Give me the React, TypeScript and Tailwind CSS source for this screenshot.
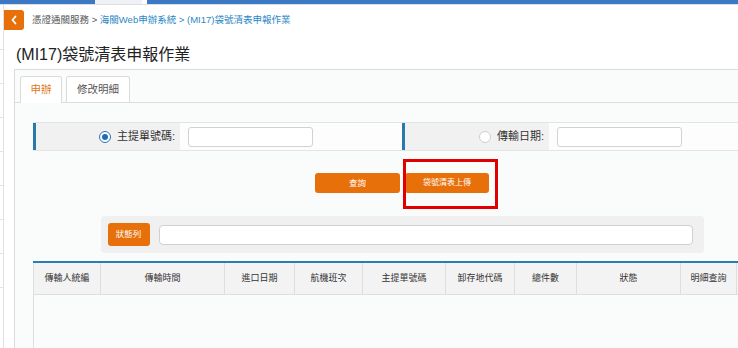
import React from "react";

const font = { fontFamily: '"Liberation Sans", "Noto Sans CJK TC", sans-serif' };

function Radio({ checked }: { checked: boolean }) {
  return (
    <span
      className={
        "flex h-[12px] w-[12px] items-center justify-center rounded-full border bg-white " +
        (checked ? "border-[#2a70b8]" : "border-[#cfcfcf]")
      }
    >
      {checked && <span className="h-[6px] w-[6px] rounded-full bg-[#1f6bb5]" />}
    </span>
  );
}

function FieldCell({ label, checked, inputLeft }: { label: string; checked: boolean; inputLeft: number }) {
  return (
    <div className="flex h-full w-[369px] shrink-0 border-l-[3px] border-[#2a79ad]">
      <div className="flex h-full w-[144px] shrink-0 items-center justify-end gap-[6px] bg-[#f1f1f1] pr-[5px]">
        <Radio checked={checked} />
        <span className="text-[11px] leading-none text-[#333]">{label}</span>
      </div>
      <div className="flex h-full flex-1 items-center bg-[#fdfdfd]" style={{ paddingLeft: inputLeft }}>
        <div className="h-[20px] w-[125px] rounded-[3px] border border-[#d2d2d2] bg-white" />
      </div>
    </div>
  );
}

const cols: [string, number][] = [
  ["傳輸人統編", 68],
  ["傳輸時間", 124],
  ["進口日期", 70],
  ["航機班次", 68],
  ["主提單號碼", 83],
  ["卸存地代碼", 69],
  ["總件數", 62],
  ["狀態", 104],
  ["明細查詢", 56],
  ["", 34],
];

export default function App() {
  return (
    <div className="relative h-[348px] w-[738px] overflow-hidden bg-white" style={font}>
      {/* top strip */}
      <div className="flex h-[4px]">
        <div className="h-full w-[95px] bg-[#3c79c4]" />
        <div className="h-full w-[47px] bg-[#eef2f7]" />
        <div className="h-full w-[5px] bg-white" />
        <div className="h-full flex-1 bg-[#3c79c4]" />
      </div>
      <div className="h-px bg-[#dedede]" />

      <div className="flex h-[343px]">
        {/* sidebar remnant */}
        <div className="flex w-[4px] shrink-0 flex-col border-r border-[#e2e2e2] pt-[44px]">
          {[0, 1, 2, 3, 4, 5, 6, 7].map((i) => (
            <div key={i} className="mb-[33px] h-px w-[3px] bg-[#e2e2e2]" />
          ))}
        </div>

        <div className="flex min-w-0 flex-1 flex-col">
          {/* breadcrumb */}
          <div className="mt-[5px] flex h-[20px] items-center">
            <div className="flex h-[20px] w-[20px] items-center justify-center rounded-r-[3px] bg-[#e8700b]">
              <svg width="8" height="10" viewBox="0 0 8 10">
                <polyline points="5.5,1.5 2.5,5 5.5,8.5" fill="none" stroke="white" strokeWidth="1.8" strokeLinecap="round" strokeLinejoin="round" />
              </svg>
            </div>
            <div className="ml-[8px] whitespace-nowrap text-[9.5px] leading-none">
              <span className="text-[#555]">憑證通關服務 &gt; </span>
              <span className="text-[#2b87c4]">海關Web申辦系統 &gt; (MI17)袋號清表申報作業</span>
            </div>
          </div>

          {/* title */}
          <div className="ml-[12px] mt-[15px] whitespace-nowrap text-[16px] leading-[20px] text-[#222]">
            (MI17)袋號清表申報作業
          </div>

          {/* panel */}
          <div className="ml-[10px] mt-[4px] flex-1 border-l border-t border-[#dcdcdc] bg-[#fafbfb]">
            {/* tabs */}
            <div className="mt-[6px] flex h-[27px] items-end gap-[4px] border-b border-[#dcdcdc] pl-[5px]">
              <div className="-mb-px flex h-[27px] w-[42px] items-center justify-center rounded-t-[3px] border border-b-0 border-[#dcdcdc] bg-white text-[10.5px] text-[#e07a22]">
                申辦
              </div>
              <div className="flex h-[26px] w-[64px] items-center justify-center rounded-t-[3px] border border-b-0 border-[#dcdcdc] bg-white text-[10.5px] text-[#555]">
                修改明細
              </div>
            </div>

            {/* content */}
            <div className="ml-[18px] mt-[19px] w-[738px]">
              <div className="flex h-[29px] border-y border-[#e4e4e4]">
                <FieldCell label="主提單號碼:" checked={true} inputLeft={8} />
                <FieldCell label="傳輸日期:" checked={false} inputLeft={8} />
              </div>

              <div className="relative mt-[22px] flex h-[20px] justify-center gap-[5px]">
                <div className="flex h-[20px] w-[85px] items-center justify-center rounded-[3px] bg-[#e8700b] text-[8.5px] text-white">
                  查詢
                </div>
                <div className="flex h-[20px] w-[84px] items-center justify-center rounded-[3px] bg-[#e8700b] text-[8px] text-white">
                  袋號清表上傳
                </div>
                <div className="pointer-events-none absolute left-[370px] top-[-14px] h-[50px] w-[95px] border-[3px] border-[#e10000]" />
              </div>

              <div className="mx-auto mt-[23px] flex h-[37px] w-[603px] items-center rounded-[4px] bg-[#f0f0f0] pl-[7px] pr-[11px]">
                <div className="flex h-[23px] w-[42px] items-center justify-center rounded-[3px] bg-[#e8700b] text-[8.5px] text-white">
                  狀態列
                </div>
                <div className="ml-[9px] h-[20px] flex-1 rounded-[4px] border border-[#d0d0d0] bg-white" />
              </div>

              {/* table */}
              <div className="mt-[8px] border-t-2 border-[#2a7db3]">
                <div className="flex h-[32px] border-b border-l border-[#dedede] bg-[#f3f3f3]">
                  {cols.map(([t, w], i) => (
                    <div
                      key={i}
                      className="flex h-full shrink-0 items-center justify-center border-r border-[#dedede] text-[9px] text-[#333]"
                      style={{ width: i === 0 ? w - 1 : w }}
                    >
                      {t}
                    </div>
                  ))}
                </div>
                <div className="h-[60px] border-l border-[#dedede] bg-[#fafbfb]" />
              </div>
            </div>
          </div>
        </div>
      </div>
    </div>
  );
}
